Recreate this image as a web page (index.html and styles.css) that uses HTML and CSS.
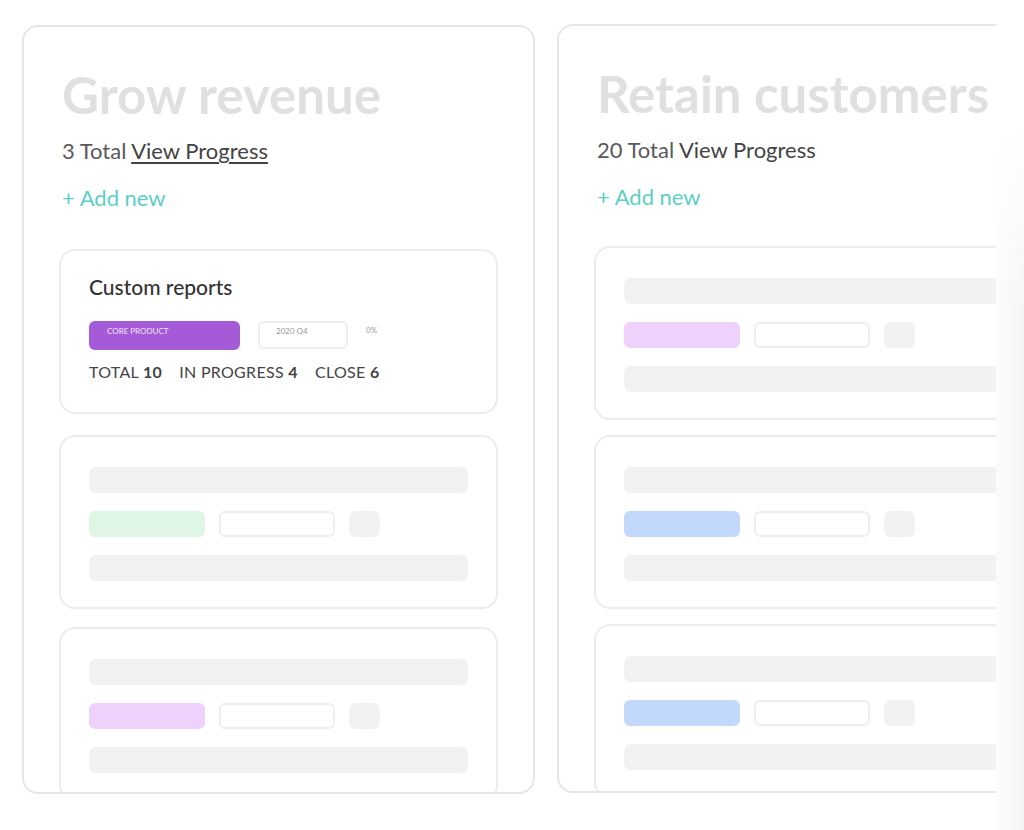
FILE: index.html
```html
<!DOCTYPE html>
<html lang="en">
<head>
    <meta charset="UTF-8">
    <meta name="viewport" content="width=device-width, initial-scale=1.0">
    <title>Goals board</title>
    <link rel="stylesheet" href="styles.css">
</head>
<body>
    <div class="page">
        <div class="board">
            <!-- Column 1 -->
            <section class="column">
                <h1 class="column-title">Grow revenue</h1>
                <p class="column-meta">3 Total <a href="#" class="progress-link">View Progress</a></p>
                <a href="#" class="add-new">+ Add new</a>

                <div class="card card-filled">
                    <h2 class="card-title">Custom reports</h2>
                    <div class="tag-row">
                        <span class="tag tag-purple">CORE PRODUCT</span>
                        <span class="tag tag-outline">2020 Q4</span>
                        <span class="percent">0%</span>
                    </div>
                    <div class="stats">
                        <span>TOTAL <b>10</b></span>
                        <span>IN PROGRESS <b>4</b></span>
                        <span>CLOSE <b>6</b></span>
                    </div>
                </div>

                <div class="card card-skeleton">
                    <div class="bar"></div>
                    <div class="tag-row">
                        <span class="tag tag-green"></span>
                        <span class="tag tag-outline"></span>
                        <span class="tag tag-square"></span>
                    </div>
                    <div class="bar"></div>
                </div>

                <div class="card card-skeleton">
                    <div class="bar"></div>
                    <div class="tag-row">
                        <span class="tag tag-lilac"></span>
                        <span class="tag tag-outline"></span>
                        <span class="tag tag-square"></span>
                    </div>
                    <div class="bar"></div>
                </div>
            </section>

            <!-- Column 2 -->
            <section class="column column-alt">
                <h1 class="column-title">Retain customers</h1>
                <p class="column-meta">20 Total <span class="progress-plain">View Progress</span></p>
                <a href="#" class="add-new">+ Add new</a>

                <div class="card card-skeleton card-first">
                    <div class="bar"></div>
                    <div class="tag-row">
                        <span class="tag tag-lilac"></span>
                        <span class="tag tag-outline"></span>
                        <span class="tag tag-square"></span>
                    </div>
                    <div class="bar"></div>
                </div>

                <div class="card card-skeleton">
                    <div class="bar"></div>
                    <div class="tag-row">
                        <span class="tag tag-blue"></span>
                        <span class="tag tag-outline"></span>
                        <span class="tag tag-square"></span>
                    </div>
                    <div class="bar"></div>
                </div>

                <div class="card card-skeleton">
                    <div class="bar"></div>
                    <div class="tag-row">
                        <span class="tag tag-blue"></span>
                        <span class="tag tag-outline"></span>
                        <span class="tag tag-square"></span>
                    </div>
                    <div class="bar"></div>
                </div>
            </section>
        </div>

        <div class="edge"></div>
    </div>
</body>
</html>
```

FILE: styles.css
```css
body {
    margin: 0;
    background-color: #ffffff;
    font-family: 'Lato', 'Noto Sans', sans-serif;
    color: #444;
}

.page {
    display: flex;
    height: 830px;
}

.board {
    width: 996px;
    flex-shrink: 0;
    display: flex;
    gap: 22px;
    padding: 25px 0 0 22px;
    box-sizing: border-box;
    overflow: hidden;
}

/* faint grey strip on the right */
.edge {
    flex: 1;
    background:
        linear-gradient(to bottom, #ffffff 120px, rgba(255, 255, 255, 0) 320px),
        linear-gradient(to right, #fcfcfc, #f5f5f5);
}

.column {
    width: 513px;
    height: 769px;
    flex-shrink: 0;
    box-sizing: border-box;
    border: 2px solid #e6e6e6;
    border-radius: 16px;
    padding: 0 35px;
    overflow: hidden;
}

.column-alt {
    margin-top: -1px;
}

.column-title {
    margin: 37px 0 0 3px;
    font-size: 51px;
    font-weight: 700;
    line-height: 62px;
    color: #e0e0e0;
    white-space: nowrap;
}

.column-meta {
    margin: 11px 0 0 3px;
    font-size: 22px;
    line-height: 28px;
    color: #5a5a5a;
}

.progress-link {
    color: #444;
    text-decoration: underline;
    text-underline-offset: 3px;
    text-decoration-thickness: 2px;
}

.progress-plain {
    color: #444;
}

.add-new {
    display: block;
    margin: 19px 0 0 3px;
    font-size: 22px;
    line-height: 28px;
    color: #5ccfc5;
    text-decoration: none;
}

.card {
    box-sizing: border-box;
    border: 2px solid #ececec;
    border-radius: 16px;
    background-color: #fff;
    margin-top: 18px;
}

.card-filled + .card {
    margin-top: 21px;
}

.column-alt .card {
    margin-top: 15px;
}

.card-filled {
    margin-top: 37px;
    height: 165px;
    padding: 21px 28px 0 28px;
}

.column-alt .card-first {
    margin-top: 35px;
}

.card-skeleton {
    height: 174px;
    padding: 30px 28px 0 28px;
    display: flex;
    flex-direction: column;
    gap: 18px;
}

.card-title {
    margin: 0;
    font-size: 21px;
    font-weight: 500;
    line-height: 30px;
    color: #333;
}

.tag-row {
    display: flex;
    align-items: flex-start;
    gap: 14px;
}

.card-filled .tag-row {
    margin-top: 19px;
    gap: 18px;
}

.tag {
    box-sizing: border-box;
    height: 26px;
    width: 116px;
    border-radius: 6px;
    font-size: 8px;
    line-height: 10px;
}

.tag-purple {
    width: 151px;
    height: 29px;
    background-color: #a55bd8;
    color: #f3e6ff;
    padding: 5px 0 0 18px;
}

.tag-outline {
    width: 116px;
    border: 2px solid #eeeeee;
    color: #999;
}

.card-filled .tag-outline {
    width: 90px;
    height: 28px;
    padding: 3px 0 0 16px;
}

.percent {
    font-size: 8px;
    color: #999;
    padding-top: 4px;
}

.tag-square {
    width: 31px;
    background-color: #f2f2f2;
}

.tag-green {
    background-color: #dff5e6;
}

.tag-lilac {
    background-color: #efd2fc;
}

.tag-blue {
    background-color: #c3d9fc;
}

.bar {
    height: 26px;
    border-radius: 7px;
    background-color: #f2f2f2;
}

.stats {
    display: flex;
    gap: 17px;
    margin-top: 12px;
    font-size: 16px;
    letter-spacing: 0.3px;
    color: #444;
}

.stats b {
    font-weight: 700;
}
```
